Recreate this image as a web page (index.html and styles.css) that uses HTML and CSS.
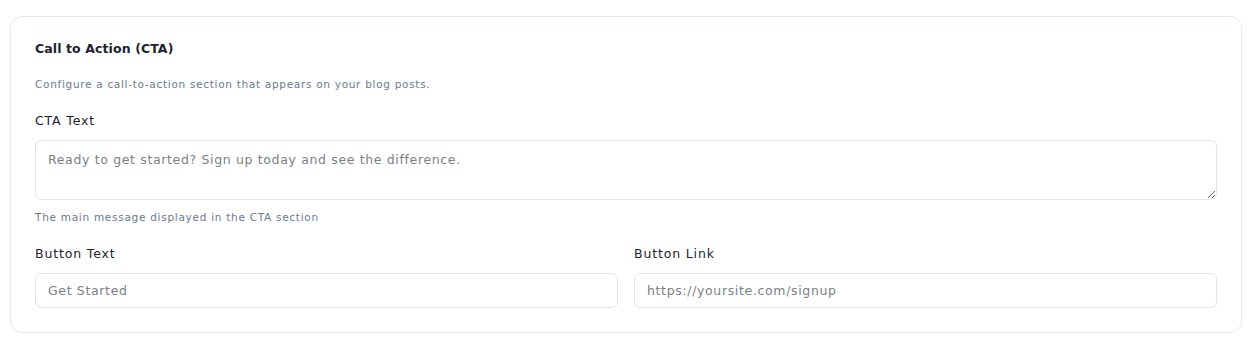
FILE: index.html
```html
<!DOCTYPE html>
<html lang="en">
<head>
<meta charset="utf-8">
<title>CTA Settings</title>
<link rel="stylesheet" href="styles.css">
</head>
<body>
<section class="card">
  <h2 class="card-title">Call to Action (CTA)</h2>
  <p class="card-desc">Configure a call-to-action section that appears on your blog posts.</p>
  <div class="field">
    <label class="label" for="cta-text">CTA Text</label>
    <textarea id="cta-text" class="textarea" placeholder="Ready to get started? Sign up today and see the difference."></textarea>
    <p class="help">The main message displayed in the CTA section</p>
  </div>
  <div class="row">
    <div class="field">
      <label class="label" for="btn-text">Button Text</label>
      <input id="btn-text" class="input" type="text" placeholder="Get Started">
    </div>
    <div class="field">
      <label class="label" for="btn-link">Button Link</label>
      <input id="btn-link" class="input" type="text" placeholder="https://yoursite.com/signup">
    </div>
  </div>
</section>
</body>
</html>
```

FILE: styles.css
```css
* { box-sizing: border-box; }
html, body { margin: 0; background: #ffffff; }
body {
  padding: 16px 11px 0 10px;
  font-family: "DejaVu Sans", "Open Sans", sans-serif;
  color: #1e293b;
}
.card {
  border: 1px solid #e5e9f0;
  border-radius: 12px;
  padding: 24px 24px 24px 24px;
  background: #fff;
}
.card-title {
  margin: 0;
  font-size: 12.5px;
  line-height: 16px;
  font-weight: 600;
  letter-spacing: 0.1px;
  color: #1e2230;
}
.card-desc {
  margin: 20px 0 0;
  font-size: 10.5px;
  line-height: 14px;
  letter-spacing: 0.7px;
  color: #6b7a90;
}
.field { display: flex; flex-direction: column; }
.card-desc + .field { margin-top: 22px; }
.label {
  font-size: 12.5px;
  line-height: 16px;
  font-weight: 500;
  letter-spacing: 0.85px;
  color: #1e2230;
  margin-bottom: 11px;
}
.textarea {
  display: block;
  width: 100%;
  height: 60px;
  border: 1px solid #e2e6ec;
  border-radius: 6px;
  padding: 10px 12px 6px;
  font-family: inherit;
  font-size: 12.5px;
  line-height: 18px;
  letter-spacing: 0.65px;
  resize: vertical;
  color: #333;
  background: #fff;
}
.help {
  margin: 10px 0 0;
  font-size: 10.5px;
  line-height: 14px;
  letter-spacing: 0.72px;
  color: #6b7a90;
}
.row {
  display: grid;
  grid-template-columns: 1fr 1fr;
  gap: 16px;
  margin-top: 22px;
}
.row .label { margin-bottom: 11px; }
.input {
  display: block;
  width: 100%;
  height: 35px;
  border: 1px solid #e2e6ec;
  border-radius: 6px;
  padding: 0 12px;
  font-family: inherit;
  font-size: 12.5px;
  letter-spacing: 0.65px;
  color: #333;
  background: #fff;
}
.textarea::placeholder, .input::placeholder { color: #7b7f86; opacity: 1; }
```
